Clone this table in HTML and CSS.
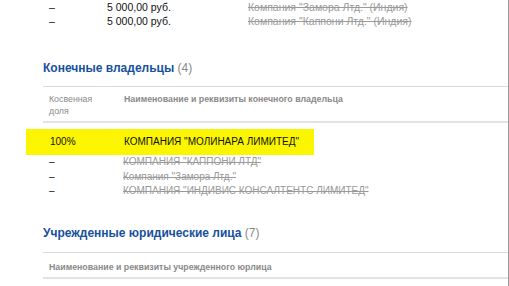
FILE: index.html
```html
<!DOCTYPE html>
<html lang="ru">
<head>
<meta charset="utf-8">
<link rel="stylesheet" href="styles.css">
</head>
<body>
<div class="page">
  <div class="founders">
    <div class="frow">
      <span class="c-dash">–</span>
      <span class="c-sum">5 000,00 руб.</span>
      <span class="c-name old">Компания "Замора Лтд." (Индия)</span>
    </div>
    <div class="frow">
      <span class="c-dash">–</span>
      <span class="c-sum">5 000,00 руб.</span>
      <span class="c-name old">Компания "Каппони Лтд." (Индия)</span>
    </div>
  </div>

  <section class="block owners">
    <h2 class="title">Конечные владельцы <span class="count">(4)</span></h2>
    <div class="thead">
      <div class="th share">Косвенная<br>доля</div>
      <div class="th">Наименование и реквизиты конечного владельца</div>
    </div>
    <div class="tbody">
      <div class="orow current">
        <span class="share">100%</span>
        <span>КОМПАНИЯ "МОЛИНАРА ЛИМИТЕД"</span>
      </div>
      <div class="orow">
        <span class="share">–</span>
        <span class="old">КОМПАНИЯ "КАППОНИ ЛТД"</span>
      </div>
      <div class="orow">
        <span class="share">–</span>
        <span class="old">Компания "Замора Лтд."</span>
      </div>
      <div class="orow">
        <span class="share">–</span>
        <span class="old">КОМПАНИЯ "ИНДИВИС КОНСАЛТЕНТС ЛИМИТЕД"</span>
      </div>
    </div>
  </section>

  <section class="block subs">
    <h2 class="title">Учрежденные юридические лица <span class="count">(7)</span></h2>
    <div class="thead single">
      <div class="th">Наименование и реквизиты учрежденного юрлица</div>
    </div>
  </section>
</div>
</body>
</html>
```

FILE: styles.css
```css
html, body {
  margin: 0;
  padding: 0;
  background: #fff;
}

body {
  font-family: "Liberation Sans", Arial, sans-serif;
  font-size: 10px;
  color: #111;
  overflow: hidden;
}

.page {
  width: 509px;
  height: 286px;
  border-right: 1px solid #9a9a9a;
  padding-left: 43px;
  box-sizing: border-box;
}

/* founders table tail */
.frow {
  display: flex;
  font-size: 10.5px;
  line-height: 14px;
}

.c-dash {
  width: 64px;
  padding-left: 6px;
  box-sizing: border-box;
}

.c-sum {
  width: 141px;
}

.old {
  color: #9a9a9a;
  text-decoration: line-through;
}

/* section blocks */
.title {
  margin: 0;
  font-size: 12px;
  font-weight: bold;
  color: #16509e;
  line-height: 16px;
}

.count {
  font-weight: normal;
  color: #8a8a8a;
}

.owners {
  margin-top: 32px;
}

.owners .title {
  margin-bottom: 10px;
}

.thead {
  display: flex;
  border-top: 1px solid #d9d9d9;
  border-bottom: 2px solid #e4e4e4;
  padding: 6px 0 4px 6px;
  font-size: 8.8px;
  line-height: 12px;
  color: #8a8a8a;
  font-weight: bold;
}

.th.share {
  width: 75px;
  font-weight: normal;
}

.tbody {
  padding-top: 6px;
}

.orow {
  display: flex;
  line-height: 14.5px;
  padding-left: 6px;
}

.orow .share {
  width: 74px;
  flex-shrink: 0;
}

.orow.current {
  background: #fbf600;
  width: fit-content;
  margin-left: -17px;
  padding: 6px 15px 6px 24px;
  line-height: 14px;
}

.subs {
  margin-top: 26px;
}

.subs .title {
  margin-bottom: 11px;
}

.thead.single {
  padding: 8px 0 4px 6px;
  border-bottom: 2px solid #e4e4e4;
}
```
